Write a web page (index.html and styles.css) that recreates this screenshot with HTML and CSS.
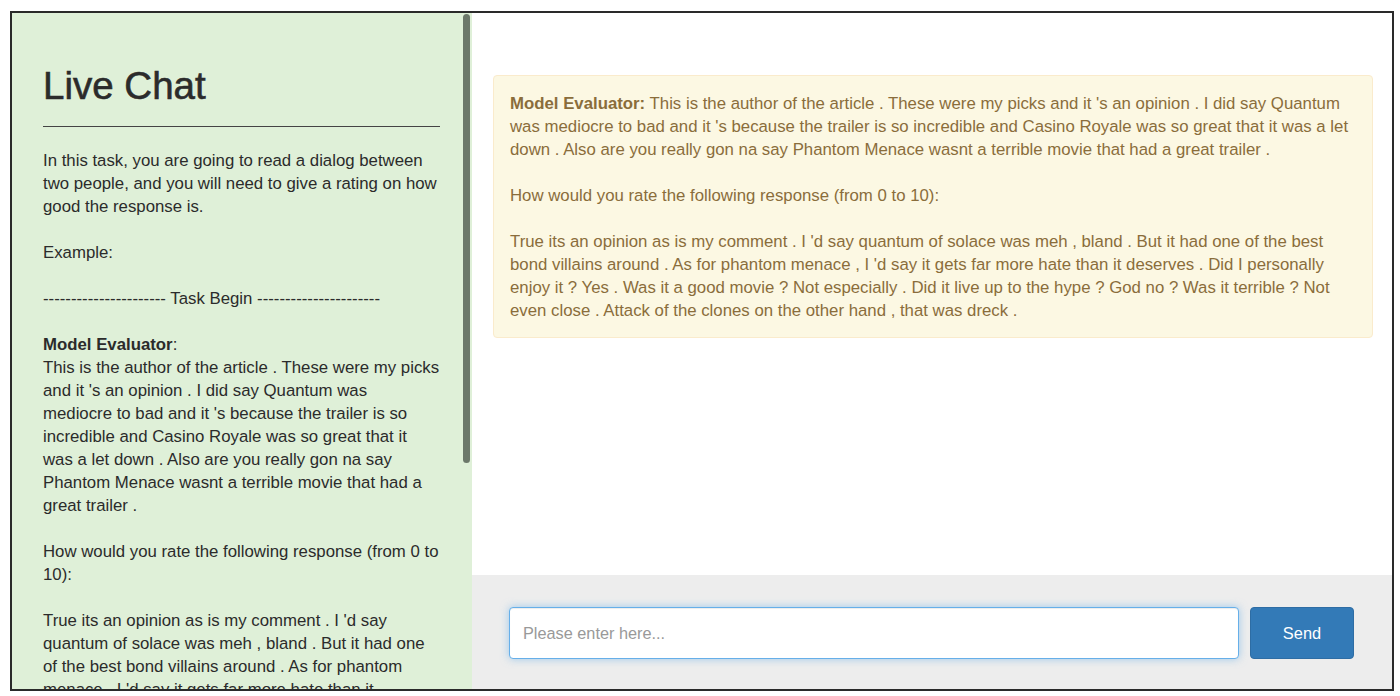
FILE: index.html
```html
<!DOCTYPE html>
<html lang="en">
<head>
	<meta charset="UTF-8">
	<title>Live Chat</title>
	<link rel="stylesheet" href="styles.css">
</head>
<body>
	<div class="frame">
		<div class="side">
			<div class="side-inner">
				<h1>Live Chat</h1>
				<hr>
				<div class="task">
					In this task, you are going to read a dialog between two people, and you will need to give a rating on how good the response is.<br><br>
					Example:<br><br>
					---------------------- Task Begin ----------------------<br><br>
					<b>Model Evaluator</b>:<br>
					This is the author of the article . These were my picks and it 's an opinion . I did say Quantum was mediocre to bad and it 's because the trailer is so incredible and Casino Royale was so great that it was a let down . Also are you really gon na say Phantom Menace wasnt a terrible movie that had a great trailer .<br><br>
					How would you rate the following response (from 0 to 10):<br><br>
					True its an opinion as is my comment . I 'd say quantum of solace was meh , bland . But it had one of the best bond villains around . As for phantom menace , I 'd say it gets far more hate than it deserves . Did I personally enjoy it ? Yes . Was it a good movie ? Not especially . Did it live up to the hype ? God no ? Was it terrible ? Not even close . Attack of the clones on the other hand , that was dreck .
				</div>
			</div>
			<div class="scroll-thumb"></div>
		</div>
		<div class="main">
			<div class="messages">
				<div class="alert">
					<b>Model Evaluator:</b> This is the author of the article . These were my picks and it 's an opinion . I did say Quantum was mediocre to bad and it 's because the trailer is so incredible and Casino Royale was so great that it was a let down . Also are you really gon na say Phantom Menace wasnt a terrible movie that had a great trailer .<br><br>
					How would you rate the following response (from 0 to 10):<br><br>
					True its an opinion as is my comment . I 'd say quantum of solace was meh , bland . But it had one of the best bond villains around . As for phantom menace , I 'd say it gets far more hate than it deserves . Did I personally enjoy it ? Yes . Was it a good movie ? Not especially . Did it live up to the hype ? God no ? Was it terrible ? Not even close . Attack of the clones on the other hand , that was dreck .
				</div>
			</div>
			<div class="composer">
				<input type="text" class="msg-input" placeholder="Please enter here..." autofocus>
				<button class="btn-send">Send</button>
			</div>
		</div>
	</div>
</body>
</html>
```
FILE: styles.css
```css
*{
	box-sizing: border-box;
}
body{
	margin: 0;
	padding: 11px 0 0 10px;
	background: #fff;
	font-family: "Liberation Sans", Arial, Helvetica, sans-serif;
	font-size: 16.8px;
	line-height: 23px;
	color: #2b2b2b;
}
.frame{
	display: flex;
	width: 1384px;
	height: 680px;
	border: 2px solid #2a2a2a;
}
.side{
	position: relative;
	width: 460px;
	flex: none;
	background: #dff0d8;
	overflow: hidden;
}
.side-inner{
	padding: 52px 32px 30px 31px;
}
/* scrollbar thumb, drawn over the panel */
.scroll-thumb{
	position: absolute;
	top: 1px;
	right: 2px;
	width: 7px;
	height: 449px;
	border-radius: 4px;
	background: #6c786a;
}
.side h1{
	margin: 0;
	font-size: 38.5px;
	line-height: 42px;
	font-weight: 400;
	color: #2b2b2b;
	-webkit-text-stroke: 0.6px #2b2b2b;
}
.side hr{
	margin: 19px 0 22px;
	border: 0;
	border-top: 1px solid #444;
}
.main{
	flex: 1;
	display: flex;
	flex-direction: column;
	background: #fff;
}
.messages{
	flex: 1;
	padding: 62px 19px 0 21px;
}
.alert{
	padding: 16px 15px 15px 16px;
	background: #fcf8e3;
	border: 1px solid #faebcc;
	border-radius: 4px;
	color: #8a6d3b;
}
.composer{
	display: flex;
	gap: 11px;
	height: 114px;
	padding: 32px 38px 0 37px;
	background: #ededed;
}
.msg-input{
	flex: 1;
	height: 52px;
	padding: 0 13px;
	border: 1px solid #66afe9;
	border-radius: 4px;
	outline: 0;
	box-shadow: inset 0 1px 1px rgba(0,0,0,.075), 0 0 8px rgba(102,175,233,.6);
	font-family: inherit;
	font-size: 16.3px;
	color: #555;
}
.msg-input::placeholder{
	color: #999;
}
.btn-send{
	width: 104px;
	height: 52px;
	border: 1px solid #2e6da4;
	border-radius: 4px;
	background: #337ab7;
	color: #fff;
	font-family: inherit;
	font-size: 16.4px;
}
```
